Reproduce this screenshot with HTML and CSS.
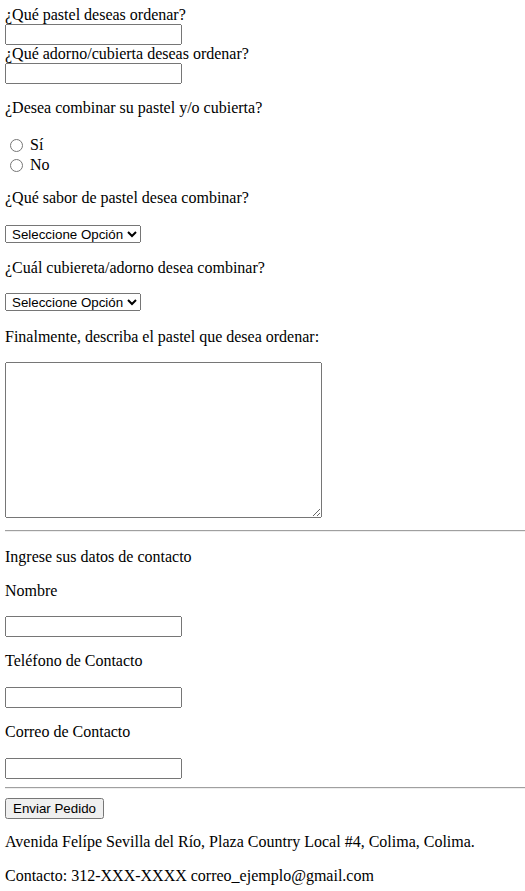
FILE: index.html
```html
<!DOCTYPE html>
<html lang="es">
<head>
<meta charset="utf-8">
<title>Pedido de pastel</title>
<link rel="stylesheet" href="styles.css">
</head>
<body class="page">
<form class="order">
  <label class="line">¿Qué pastel deseas ordenar?</label>
  <input class="field" type="text">
  <label class="line">¿Qué adorno/cubierta deseas ordenar?</label>
  <input class="field" type="text">

  <p class="line q-combine">¿Desea combinar su pastel y/o cubierta?</p>
  <div class="radios">
    <label class="radio-row"><input class="radio" type="radio" name="comb"><span>Sí</span></label>
    <label class="radio-row"><input class="radio" type="radio" name="comb"><span>No</span></label>
  </div>

  <p class="line q-sabor">¿Qué sabor de pastel desea combinar?</p>
  <select class="choice s1"><option>Seleccione Opción</option></select>

  <p class="line q-cubierta">¿Cuál cubiereta/adorno desea combinar?</p>
  <select class="choice s2"><option>Seleccione Opción</option></select>

  <p class="line q-final">Finalmente, describa el pastel que desea ordenar:</p>
  <textarea class="desc"></textarea>

  <hr class="rule r1">

  <p class="line c-title">Ingrese sus datos de contacto</p>
  <p class="line c-nombre">Nombre</p>
  <input class="field f-nombre" type="text">
  <p class="line c-tel">Teléfono de Contacto</p>
  <input class="field f-tel" type="text">
  <p class="line c-correo">Correo de Contacto</p>
  <input class="field f-correo" type="text">

  <hr class="rule r2">

  <button class="send" type="button">Enviar Pedido</button>
</form>
<p class="line addr">Avenida Felípe Sevilla del Río, Plaza Country Local #4, Colima, Colima.</p>
<p class="line contact">Contacto: 312-XXX-XXXX correo_ejemplo@gmail.com</p>
</body>
</html>
```
FILE: styles.css
```css
html, body {
  margin: 0;
  padding: 0;
  background: #fff;
}
.page {
  padding: 6px 0 0 5px;
  font-family: "Liberation Serif", "Times New Roman", serif;
  font-size: 16px;
  color: #000;
}
.order {
  display: flex;
  flex-direction: column;
  align-items: flex-start;
  margin: 0;
}
.line {
  display: block;
  margin: 0;
  line-height: 18px;
  white-space: nowrap;
}
.field {
  display: block;
  box-sizing: border-box;
  width: 177px;
  height: 21px;
  margin: 0;
  font: 13.333px "Liberation Sans", Arial, sans-serif;
}
.q-combine { margin-top: 15px; }
.radios {
  display: flex;
  flex-direction: column;
  margin-top: 18px;
}
.radio-row {
  display: flex;
  align-items: flex-start;
  height: 20px;
  line-height: 20px;
}
.radio {
  width: 13px;
  height: 13px;
  margin: 4px 7px 0 5px;
}
.q-sabor { margin-top: 14px; }
.choice {
  box-sizing: border-box;
  width: 136px;
  height: 18px;
  margin: 18px 0 0 0;
  padding: 0 0 0 2px;
  font: 13.333px "Liberation Sans", Arial, sans-serif;
  color: #000;
}
.q-cubierta { margin-top: 16px; }
.s2 { margin-top: 16px; }
.q-final { margin-top: 17px; }
.desc {
  display: block;
  box-sizing: border-box;
  width: 317px;
  height: 156px;
  margin: 16px 0 0 0;
}
.rule {
  align-self: stretch;
  height: 0;
  margin: 12px 0 0 0;
  border: 0;
  border-top: 1px solid #a0a0a0;
  border-bottom: 1px solid #eeeeee;
}
.c-title { margin-top: 16px; }
.c-nombre { margin-top: 16px; }
.f-nombre { margin-top: 16px; }
.c-tel { margin-top: 15px; }
.f-tel { margin-top: 17px; }
.c-correo { margin-top: 15px; }
.f-correo { margin-top: 17px; }
.r2 { margin-top: 8px; }
.send {
  box-sizing: border-box;
  width: 99px;
  height: 21px;
  margin: 9px 0 0 0;
  padding: 1px 6px;
  font: 13.333px "Liberation Sans", Arial, sans-serif;
  color: #000;
}
.addr { margin-top: 14px; }
.contact { margin-top: 16px; }
```
